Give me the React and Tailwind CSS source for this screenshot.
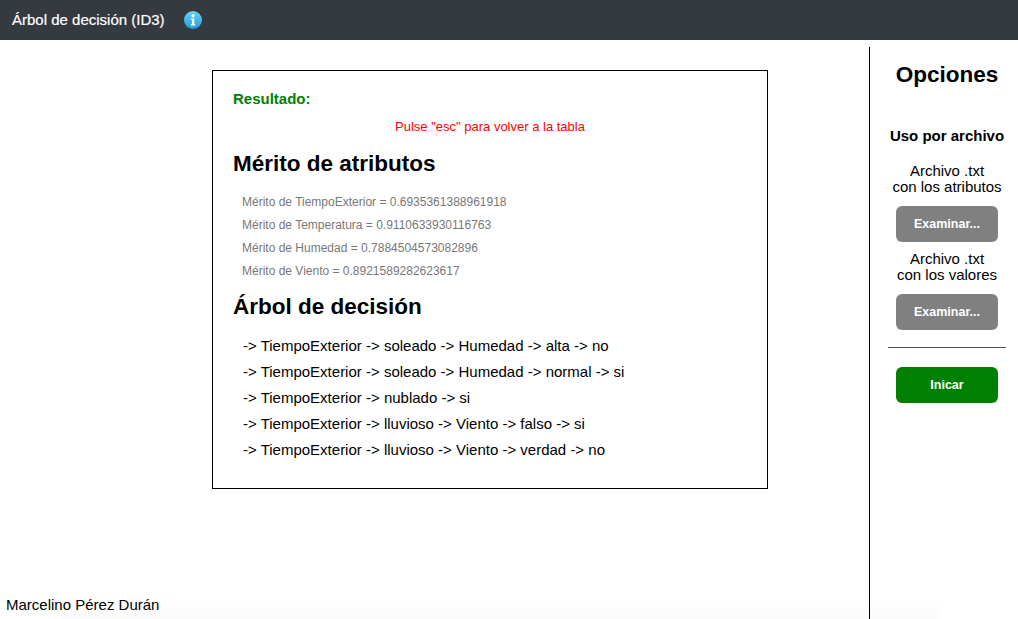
import React from 'react';

const meritos = [
  'Mérito de TiempoExterior = 0.6935361388961918',
  'Mérito de Temperatura = 0.9110633930116763',
  'Mérito de Humedad = 0.7884504573082896',
  'Mérito de Viento = 0.8921589282623617',
];

const reglas = [
  '-> TiempoExterior -> soleado -> Humedad -> alta -> no',
  '-> TiempoExterior -> soleado -> Humedad -> normal -> si',
  '-> TiempoExterior -> nublado -> si',
  '-> TiempoExterior -> lluvioso -> Viento -> falso -> si',
  '-> TiempoExterior -> lluvioso -> Viento -> verdad -> no',
];

const InfoIcon = () => (
  <svg width="18" height="18" viewBox="0 0 18 18">
    <defs>
      <linearGradient id="infoGrad" x1="0" y1="0" x2="0" y2="1">
        <stop offset="0" stopColor="#6fd0f3" />
        <stop offset="1" stopColor="#1a9fdc" />
      </linearGradient>
    </defs>
    <circle cx="9" cy="9" r="9" fill="url(#infoGrad)" />
    <circle cx="9" cy="4.8" r="1.6" fill="#fff" />
    <path d="M6.9 7.4h3.4v5.6h1v1.4H6.9V13h1V8.8h-1z" fill="#fff" />
  </svg>
);

const Boton = ({ children, color }) => (
  <button className={`block w-[102px] h-9 mx-auto rounded-md text-white text-[12.5px] font-bold ${color}`}>
    {children}
  </button>
);

export default function App() {
  return (
    <div className="relative h-[619px] w-[1018px] overflow-hidden bg-white text-black font-['Liberation_Sans',Arial,sans-serif]">
      <div className="pointer-events-none absolute bottom-0 left-[60px] h-[22px] w-[880px] bg-gradient-to-b from-white to-[#fbfbfb]" />

      <header className="relative flex h-10 items-center bg-[#353940] pl-3 text-white">
        <span className="text-[15px] [-webkit-text-stroke:0.2px_white]">Árbol de decisión (ID3)</span>
        <span className="ml-[19px] flex"><InfoIcon /></span>
      </header>

      <div className="relative flex h-[579px]">
        <main className="relative w-[869px] shrink-0">
          <section className="ml-[212px] mt-[30px] h-[419px] w-[556px] border border-black bg-white pl-5 pr-5 pt-[19px]">
            <p className="text-[15px] leading-[18px] font-bold text-[#008000]">Resultado:</p>
            <p className="mt-[11px] text-center text-[13px] leading-[16px] text-[#ff0000]">
              Pulse "esc" para volver a la tabla
            </p>
            <h2 className="mt-[15px] text-[22.5px] leading-7 font-bold">Mérito de atributos</h2>
            <ul className="mt-[13px] pl-[9px] text-xs leading-[23px] text-[#777777]">
              {meritos.map(m => <li key={m}>{m}</li>)}
            </ul>
            <h2 className="mt-[10px] text-[22.5px] leading-7 font-bold">Árbol de decisión</h2>
            <ul className="mt-[12px] pl-[10px] text-[15px] leading-[26px]">
              {reglas.map(r => <li key={r}>{r}</li>)}
            </ul>
          </section>
          <p className="absolute bottom-[6px] left-[6px] text-[15px] leading-4">Marcelino Pérez Durán</p>
        </main>

        <aside className="mt-[7px] flex-1 border-l border-black pl-[6px] text-center">
          <h1 className="mt-[14px] text-[22.5px] leading-7 font-bold">Opciones</h1>
          <h3 className="mt-[39px] text-[15px] leading-4 font-bold whitespace-nowrap">Uso por archivo</h3>
          <p className="mt-[19px] text-[15px] leading-4 whitespace-nowrap">Archivo .txt<br />con los atributos</p>
          <div className="mt-[11px]"><Boton color="bg-[#808080]">Examinar...</Boton></div>
          <p className="mt-[9px] text-[15px] leading-4 whitespace-nowrap">Archivo .txt<br />con los valores</p>
          <div className="mt-[11px]"><Boton color="bg-[#808080]">Examinar...</Boton></div>
          <hr className="mx-auto mt-[17px] w-[118px] border-t border-[#555555]" />
          <div className="mt-[19px]"><Boton color="bg-[#008000]">Inicar</Boton></div>
        </aside>
      </div>
    </div>
  );
}
